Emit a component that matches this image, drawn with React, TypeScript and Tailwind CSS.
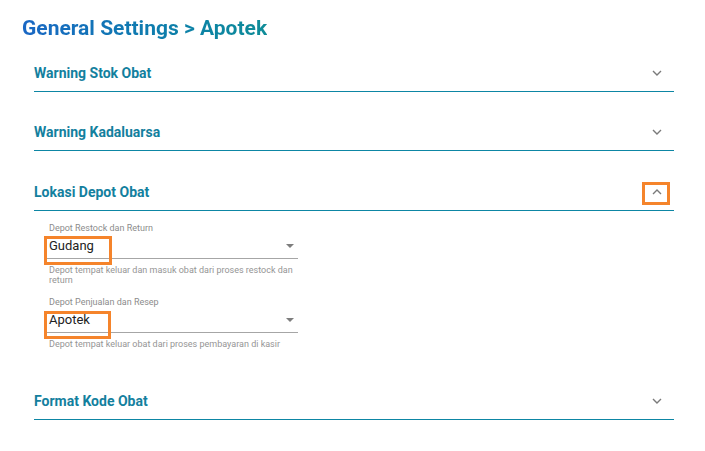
import React from "react";

const Chevron = ({ up = false }: { up?: boolean }) => (
  <svg width="10" height="6" viewBox="0 0 10 6" className="block">
    <path
      d={up ? "M1 5 L5 1 L9 5" : "M1 1 L5 5 L9 1"}
      fill="none"
      stroke="#7a7a7a"
      strokeWidth="1.4"
    />
  </svg>
);

const Caret = () => (
  <svg width="8" height="4" viewBox="0 0 8 4" className="block">
    <path d="M0 0 L8 0 L4 4 Z" fill="#7d7d7d" />
  </svg>
);

const Header = ({ title, open = false }: { title: string; open?: boolean }) => (
  <div className="pt-[22px]">
    <div className="relative flex h-[37px] items-center justify-between border-b border-[#0d86a4]">
      <span className="text-[14px] font-bold leading-[16px] text-[#13809e]">{title}</span>
      <div className="mr-[12px] flex h-[16px] w-[10px] items-center justify-center">
        <Chevron up={open} />
      </div>
      {open && (
        <div className="absolute right-[4px] top-[8px] h-[23px] w-[28px] border-[3px] border-[#f5842b]" />
      )}
    </div>
  </div>
);

const Field = ({
  label,
  value,
  helper,
  first,
}: {
  label: string;
  value: string;
  helper: string;
  first?: boolean;
}) => (
  <div className="w-[253px]">
    <div className="pl-[4px] text-[9px] leading-[11px] text-[#8c8c8c]">{label}</div>
    <div className="relative flex h-[25px] items-center justify-between border-b border-[#a6a6a6] pl-[4px] pr-[4px] pb-[1px]">
      <span className="text-[13px] leading-[18px] text-[#222]">{value}</span>
      <Caret />
      <div
        className={
          first
            ? "absolute left-[-1px] top-[2px] h-[29px] w-[68px] border-[3px] border-[#f5842b]"
            : "absolute left-[-1px] top-[3px] h-[28px] w-[67px] border-[3px] border-[#f5842b]"
        }
      />
    </div>
    <div className="mt-[6px] pl-[4px] pr-[2px] text-[9px] leading-[10px] text-[#959595]">{helper}</div>
  </div>
);

export default function App() {
  return (
    <div className="min-h-[451px] w-[705px] bg-white px-[22px] font-['Roboto',_'Liberation_Sans',_sans-serif]">
      <div className="-mb-[9px] pt-[14px] text-[21px] font-bold leading-[28px]">
        <span className="bg-gradient-to-r from-[#1a67c4] to-[#0f8c98] bg-clip-text text-transparent">
          General Settings &gt; Apotek
        </span>
      </div>
      <div className="ml-[12px] w-[640px]">
        <Header title="Warning Stok Obat" />
        <Header title="Warning Kadaluarsa" />
        <div className="pt-[1px]">
          <Header title="Lokasi Depot Obat" open />
        </div>
        <div className="pl-[11px] pt-[12px] pb-[12px]">
          <Field
            label="Depot Restock dan Return"
            value="Gudang"
            helper="Depot tempat keluar dan masuk obat dari proses restock dan return"
            first
          />
          <div className="mt-[12px]">
            <Field
              label="Depot Penjualan dan Resep"
              value="Apotek"
              helper="Depot tempat keluar obat dari proses pembayaran di kasir"
            />
          </div>
        </div>
        <Header title="Format Kode Obat" />
      </div>
    </div>
  );
}
